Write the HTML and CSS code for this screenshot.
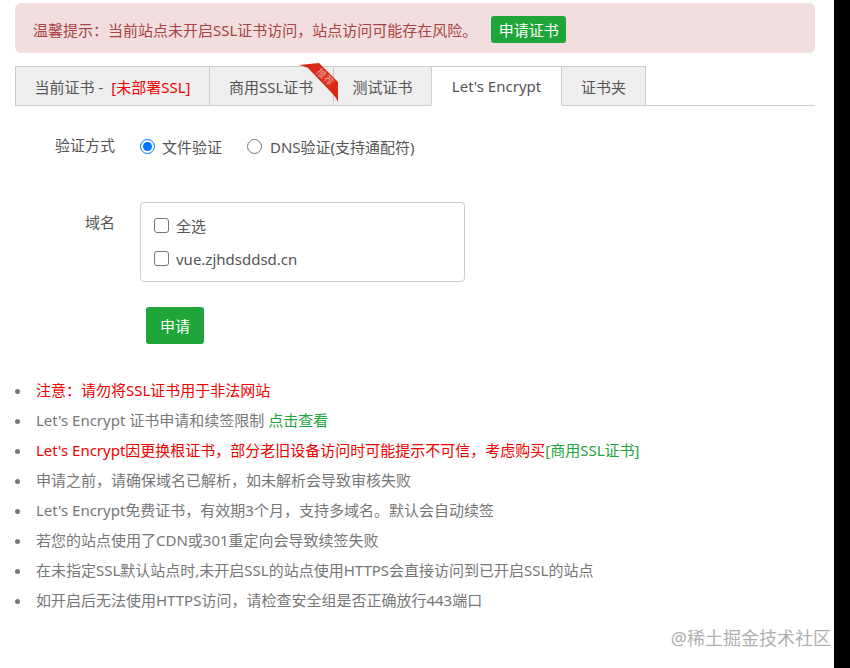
FILE: index.html
```html
<!DOCTYPE html>
<html lang="zh-CN">
<head>
<meta charset="utf-8">
<title>SSL</title>
<link rel="stylesheet" href="styles.css">
</head>
<body>
<div class="page">
  <main class="content">
    <div class="alert">
      <span>温馨提示：当前站点未开启SSL证书访问，站点访问可能存在风险。</span>
      <a class="btn btn-sm">申请证书</a>
    </div>
    <nav class="tabs">
      <a class="tab tab-current">当前证书 - <span class="red-bracket">[未部署SSL]</span></a>
      <a class="tab tab-biz">商用SSL证书
        <svg class="ribbon" width="42" height="42" viewBox="0 0 42 42">
          <path d="M1 3 L21 1 L40 20 L40 40 Q38 35 31 28 L10 6 Q6 4 1 3 Z" fill="#d92a17"/>
          <text class="ribbon-text" transform="translate(24.5 17.5) rotate(45)">推荐</text>
        </svg>
      </a>
      <a class="tab tab-test">测试证书</a>
      <a class="tab tab-active">Let's Encrypt</a>
      <a class="tab tab-folder">证书夹</a>
    </nav>
    <form class="form">
      <div class="row row-method">
        <span class="label">验证方式</span>
        <div class="radios">
          <label class="choice"><input class="radio" type="radio" name="way" checked>文件验证</label>
          <label class="choice"><input class="radio" type="radio" name="way">DNS验证(支持通配符)</label>
        </div>
      </div>
      <div class="row row-domain">
        <span class="label">域名</span>
        <div class="domain-box">
          <label class="check"><input class="checkbox" type="checkbox">全选</label>
          <label class="check"><input class="checkbox" type="checkbox">vue.zjhdsddsd.cn</label>
        </div>
      </div>
      <a class="btn btn-submit">申请</a>
    </form>
    <ul class="notes">
      <li><span class="red">注意：请勿将SSL证书用于非法网站</span></li>
      <li>Let's Encrypt 证书申请和续签限制 <a class="green">点击查看</a></li>
      <li><span class="red">Let's Encrypt因更换根证书，部分老旧设备访问时可能提示不可信，考虑购买</span><a class="green">[商用SSL证书]</a></li>
      <li>申请之前，请确保域名已解析，如未解析会导致审核失败</li>
      <li>Let's Encrypt免费证书，有效期3个月，支持多域名。默认会自动续签</li>
      <li>若您的站点使用了CDN或301重定向会导致续签失败</li>
      <li>在未指定SSL默认站点时,未开启SSL的站点使用HTTPS会直接访问到已开启SSL的站点</li>
      <li>如开启后无法使用HTTPS访问，请检查安全组是否正确放行443端口</li>
    </ul>
  </main>
  <div class="edge"></div>
  <div class="watermark">@稀土掘金技术社区</div>
</div>
</body>
</html>
```
FILE: styles.css
```css
* { box-sizing: border-box; }
html, body { margin: 0; padding: 0; background: #fff; }
body {
  font-family: "Noto Sans", "Noto Sans CJK SC", sans-serif;
  font-size: 15px;
  color: #555;
  overflow: hidden;
}
.page { position: relative; display: flex; width: 850px; height: 668px; }
.content { width: 834px; padding: 3px 19px 0 15px; }
.edge { width: 16px; background: #000; }

.alert {
  display: flex;
  align-items: center;
  height: 50px;
  padding: 3px 18px 0;
  background: #f2dede;
  border-radius: 6px;
  color: #a94442;
  white-space: nowrap;
}
.btn {
  display: inline-flex;
  align-items: center;
  justify-content: center;
  background: #20a53a;
  color: #fff;
  border-radius: 3px;
}
.btn-sm { width: 75px; height: 27px; margin: -1px 0 0 14px; }

.tabs {
  display: flex;
  height: 40px;
  margin-top: 13px;
  border-bottom: 1px solid #ccc;
}
.tab {
  display: flex;
  align-items: center;
  justify-content: center;
  position: relative;
  height: 40px;
  background: #eee;
  border: 1px solid #ccc;
  border-left: 0;
  white-space: nowrap;
}
.tab-current { width: 195px; border-left: 1px solid #ccc; }
.tab-biz { width: 124px; justify-content: flex-start; padding-left: 19px; }
.tab-test { width: 98px; }
.tab-active { width: 131px; background: #fff; border-bottom-color: #fff; border-left: 1px solid #ccc; margin-left: -1px; }
.tab-folder { width: 84px; }
.red-bracket { color: #f00000; margin-left: 8px; }
.ribbon { position: absolute; z-index: 2; top: -5px; right: -7px; overflow: visible; }
.ribbon-text { font-size: 10px; fill: #f0a090; text-anchor: middle; }

.form { display: block; }
.row { display: flex; }
.label { width: 100px; text-align: right; }
.row-method { margin-top: 29px; height: 21px; }
.row-method .label { line-height: 20px; }
.radios { display: flex; margin-left: 25px; margin-top: 1px; }
.choice { display: flex; align-items: center; height: 20px; }
.choice + .choice { margin-left: 25px; }
.radio { width: 15px; height: 15px; margin: 0 7px 0 0; }
.choice + .choice .radio { margin-right: 8px; }
.row-domain { margin-top: 46px; }
.row-domain .label { padding-top: 10px; line-height: 20px; }
.domain-box {
  width: 325px;
  height: 80px;
  margin-left: 25px;
  padding: 6px 13px;
  border: 1px solid #ccc;
  border-radius: 4px;
}
.check { display: flex; align-items: center; height: 33px; }
.checkbox {
  appearance: none;
  width: 15px;
  height: 15px;
  margin: 0 7px 0 0;
  background: #fff;
  border: 1.5px solid #767676;
  border-radius: 3px;
}
.btn-submit { width: 58px; height: 37px; margin: 25px 0 0 131px; }

.notes { margin: 31px 0 0; padding: 0 0 0 21px; color: #777; list-style: none; }
.notes li { height: 30px; line-height: 30px; white-space: nowrap; }
.notes li::before {
  content: "";
  display: inline-block;
  width: 5px;
  height: 5px;
  margin: 0 16px 0 -21px;
  border-radius: 50%;
  background: #777;
  vertical-align: 2px;
}
.red { color: #f00000; }
.green { color: #20a53a; }

.watermark {
  position: absolute;
  right: 19px;
  top: 627px;
  color: #b0b0b0;
  font-size: 18px;
  line-height: 22px;
  white-space: nowrap;
}
```
